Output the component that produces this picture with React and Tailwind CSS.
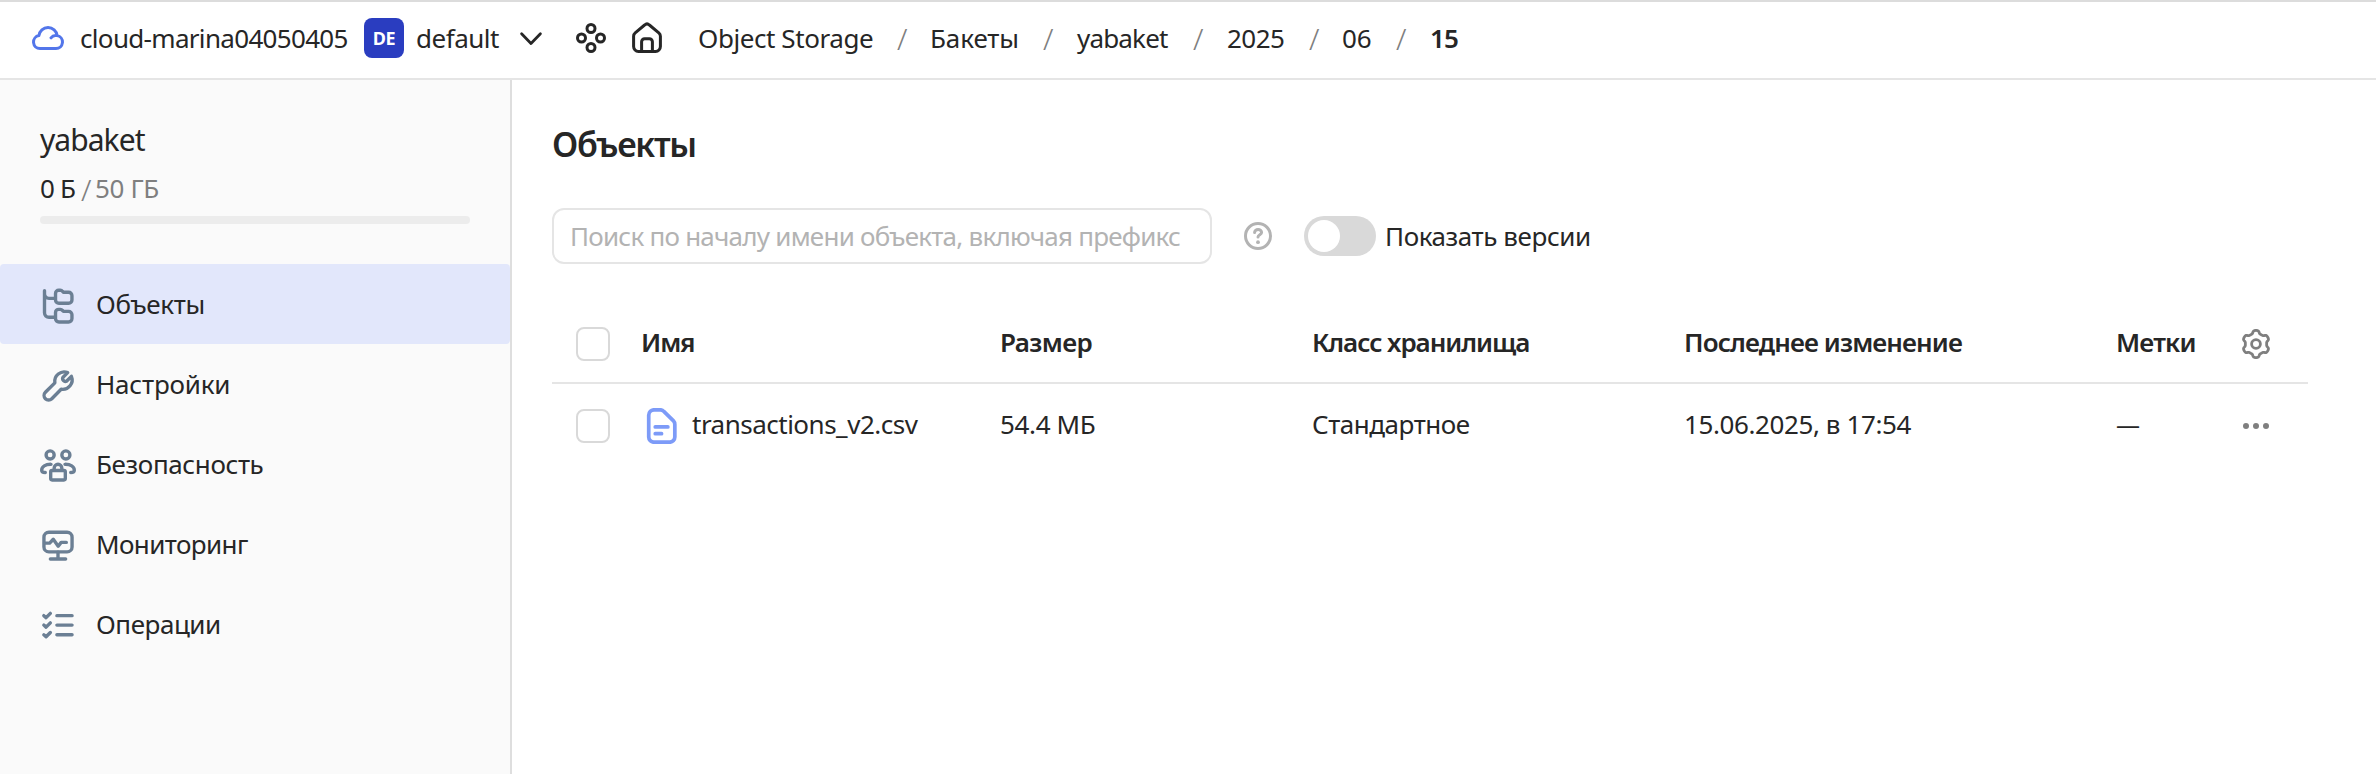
const svg = (size, children, sw = 1.5) => (
  <svg
    width={size}
    height={size}
    viewBox="0 0 16 16"
    fill="none"
    stroke="currentColor"
    strokeWidth={sw}
    strokeLinecap="round"
    strokeLinejoin="round"
    className="block shrink-0"
  >
    {children}
  </svg>
);

const CloudIcon = () =>
  svg(32, <path d="M4 13.25h8a3.25 3.25 0 0 0 .6-6.44A4.6 4.6 0 0 0 8 2.75 4.6 4.6 0 0 0 3.45 6.8 3.25 3.25 0 0 0 4 13.25ZM12.4 6.8a2.9 2.9 0 0 0-2.9 1.1" />);

const ChevronIcon = () => svg(32, <path d="M3.3 5.9 8 10.7l4.7-4.8" />, 1.4);

const NodesIcon = () =>
  svg(
    32,
    <>
      <circle cx="8" cy="3.25" r="2" />
      <circle cx="8" cy="12.75" r="2" />
      <circle cx="3.25" cy="8" r="2" />
      <circle cx="12.75" cy="8" r="2" />
    </>
  );

const HomeIcon = () =>
  svg(
    32,
    <>
      <path d="M1.3 7.1c0-.7.3-1.3.8-1.7l4.7-3.9a1.8 1.8 0 0 1 2.4 0l4.7 3.9c.5.4.8 1 .8 1.7v5.2a2.4 2.4 0 0 1-2.4 2.4H3.7a2.4 2.4 0 0 1-2.4-2.4Z" />
      <path d="M5.3 14.5v-4.6a1.5 1.5 0 0 1 1.5-1.5h2.4a1.5 1.5 0 0 1 1.5 1.5v4.6" />
    </>
  );

const TreeIcon = () =>
  svg(
    36,
    <>
      <path d="M2 1.2v9.8a2 2 0 0 0 2 2h2.7M2 2.6a2 2 0 0 0 2 2h2.7" />
      <path d="M6.9 2.4A1.4 1.4 0 0 1 8.3 1h.7c.4 0 .7.1.9.4l.5.5h2.3a1.5 1.5 0 0 1 1.5 1.5v1.9a1.5 1.5 0 0 1-1.5 1.5H8.4a1.5 1.5 0 0 1-1.5-1.5Z" />
      <path d="M6.9 10.9a1.4 1.4 0 0 1 1.4-1.4h.7c.4 0 .7.1.9.4l.5.5h2.3a1.5 1.5 0 0 1 1.5 1.5v1.7a1.5 1.5 0 0 1-1.5 1.5H8.4a1.5 1.5 0 0 1-1.5-1.5Z" />
    </>
  );

const WrenchIcon = () =>
  svg(
    36,
    <path d="M12.3 2.05A4.2 4.2 0 0 0 6.6 6.6L2.4 10.8a2 2 0 0 0 2.85 2.85L9.4 9.45a4.2 4.2 0 0 0 4.55-5.75L11.9 5.75a1.2 1.2 0 0 1-1.65-1.65Z" />
  );

const PeopleLockIcon = () =>
  svg(
    36,
    <>
      <circle cx="4.5" cy="3.1" r="1.8" />
      <circle cx="11.5" cy="3.1" r="1.8" />
      <path d="M4.9 7.25C2.4 7.2.75 8.2.75 9.9c0 .6.5 1 1.6 1M11.1 7.25c2.5-.05 4.15.95 4.15 2.65 0 .6-.5 1-1.6 1" />
      <rect x="4.75" y="10" width="6.5" height="4.2" rx=".6" />
      <path d="M6.3 9.8v-.9a1.7 1.7 0 0 1 3.4 0v.9" />
    </>
  );

const MonitorIcon = () =>
  svg(
    36,
    <>
      <rect x="1.75" y="1.9" width="12.5" height="8.7" rx="2.2" />
      <path d="M8 10.8v2.8M4.6 13.8h6.8M2 6.7h2.3l1.6-1.7L8.1 8.1l1.3-1.7h2.3" />
    </>
  );

const ChecklistIcon = () =>
  svg(
    36,
    <path d="M7.5 3.4h6.75M7.5 7.6h6.75M7.5 11.9h6.75M1.7 3.4l1 .9 1.9-1.9M1.7 7.6l1 .9 1.9-1.9M1.7 11.9l1 .9 1.9-1.9" />
  );

const FileIcon = () =>
  svg(
    36,
    <>
      <path d="M2.1 3.2A2.4 2.4 0 0 1 4.5.8h2.7c.6 0 1.2.25 1.6.7l4.3 4.2c.4.4.6 1 .6 1.6v5.6a2.3 2.3 0 0 1-2.3 2.3H4.4a2.3 2.3 0 0 1-2.3-2.3Z" />
      <path d="M5 8.4h5.6M5 11.4h2.8" />
    </>,
    1.65
  );

const HelpIcon = () =>
  svg(
    32,
    <>
      <circle cx="8" cy="8" r="6.25" />
      <path d="M6.3 6.3a1.75 1.6 0 0 1 3.5 0c0 1.1-1.8 1.1-1.8 2.2" />
      <circle cx="8" cy="11.1" r=".95" fill="currentColor" stroke="none" />
    </>
  );

// Six-tooth gear outline sampled as a smooth closed curve.
const gearPath = `M${Array.from({ length: 180 }, (_, i) => {
  const a = (i / 180) * Math.PI * 2;
  const r = 6.05 + 0.75 * Math.tanh(2 * Math.cos(6 * a));
  return `${(8 + r * Math.sin(a)).toFixed(2)} ${(8 - r * Math.cos(a)).toFixed(2)}`;
}).join('L')}Z`;

const GearIcon = () =>
  svg(
    32,
    <>
      <path d={gearPath} />
      <circle cx="8" cy="8" r="2.2" />
    </>,
    1.4
  );

const DotsIcon = () => (
  <svg width="32" height="32" viewBox="0 0 32 32" fill="currentColor" className="block shrink-0">
    <circle cx="6" cy="16" r="3" />
    <circle cx="16" cy="16" r="3" />
    <circle cx="26" cy="16" r="3" />
  </svg>
);

const Slash = () => <span className="w-[10px] shrink-0 pt-[2px] text-[30px] font-light leading-9 text-[#7f7f7f]">/</span>;

const Checkbox = () => <span className="block size-[34px] shrink-0 rounded-[8px] border-2 border-[#d9d9d9] bg-white" />;

const menu = [
  { label: 'Объекты', icon: TreeIcon, tracking: 'tracking-[-0.33px]', active: true },
  { label: 'Настройки', icon: WrenchIcon, tracking: 'tracking-[-0.2px]' },
  { label: 'Безопасность', icon: PeopleLockIcon, tracking: 'tracking-[-0.38px]' },
  { label: 'Мониторинг', icon: MonitorIcon, tracking: 'tracking-[-0.6px]' },
  { label: 'Операции', icon: ChecklistIcon, tracking: 'tracking-[-0.45px]' },
];

function Header() {
  return (
    <header className="flex h-20 shrink-0 items-center border-t-2 border-b-2 border-t-[#dcdcdc] border-b-[#e5e5e5] bg-white pb-1 pl-8">
      <span className="text-[#5376ea]"><CloudIcon /></span>
      <span className="ml-[16px] w-[284px] tracking-[-0.68px]">cloud-marina04050405</span>
      <span className="flex size-10 shrink-0 items-center justify-center rounded-[8px] bg-[#2a3dc0] text-[18px] font-bold tracking-[-0.3px] text-white">DE</span>
      <span className="ml-[12px] w-[99px] tracking-[-0.49px]">default</span>
      <ChevronIcon />
      <span className="ml-7"><NodesIcon /></span>
      <span className="ml-6"><HomeIcon /></span>
      <nav className="ml-[35px] flex items-center">
        <span className="w-[199px] tracking-[-0.42px]">Object Storage</span>
        <Slash />
        <span className="ml-[23px] w-[113px] tracking-[-0.1px]">Бакеты</span>
        <Slash />
        <span className="ml-[24px] w-[116px] tracking-[-0.83px]">yabaket</span>
        <Slash />
        <span className="ml-[24px] w-[82px] tracking-[-0.54px]">2025</span>
        <Slash />
        <span className="ml-[23px] w-[54px]">06</span>
        <Slash />
        <span className="ml-[24px] font-semibold tracking-[-0.8px]">15</span>
      </nav>
    </header>
  );
}

function Sidebar() {
  return (
    <aside className="flex w-[512px] shrink-0 flex-col border-r-2 border-[#dedede] bg-[#fafafa]">
      <div className="h-[184px] px-10 pt-[38px]">
        <div className="text-[30px] leading-[44px] tracking-[-0.95px]">yabaket</div>
        <div className="mt-[8px] flex leading-9 text-[#7f7f7f]">
          <span className="w-[41px] tracking-[-0.32px] text-[#262626] [word-spacing:-1px]">0 Б</span>
          <Slash />
          <span className="ml-[4px] tracking-[-0.36px]">50 ГБ</span>
        </div>
        <div className="mt-[8px] h-2 w-[430px] rounded-[4px] bg-[#ececec]" />
      </div>
      <nav className="flex flex-col">
        {menu.map(({ label, icon: Icon, tracking, active }) => (
          <div key={label} className={`flex h-20 items-center rounded-[4px] pl-10 ${active ? 'bg-[#e2e7fb]' : ''}`}>
            <span className="mt-1 text-[#6b7f94]"><Icon /></span>
            <span className={`ml-[20px] ${tracking}`}>{label}</span>
          </div>
        ))}
      </nav>
    </aside>
  );
}

function ObjectsTable() {
  const columns = 'grid grid-cols-[90px_358px_312px_372px_432px_124px_1fr] items-center';
  return (
    <div className="mt-[38px] w-[1756px]">
      <div className={`${columns} h-[82px] border-b-2 border-[#e5e5e5] font-semibold`}>
        <div className="pl-6 pt-[4px]"><Checkbox /></div>
        <div className="-ml-px tracking-[-1.1px]">Имя</div>
        <div className="tracking-[-0.61px]">Размер</div>
        <div className="tracking-[-1.05px]">Класс хранилища</div>
        <div className="tracking-[-0.88px]">Последнее изменение</div>
        <div className="tracking-[-0.8px]">Метки</div>
        <div className="pt-[4px] text-[#7f7f7f]"><GearIcon /></div>
      </div>
      <div className={`${columns} h-[82px]`}>
        <div className="pl-6 pt-[2px]"><Checkbox /></div>
        <div className="flex items-center pl-[2px]">
          <span className="mt-[2px] text-[#7d9bf8]"><FileIcon /></span>
          <span className="-mt-[2px] ml-[12px] tracking-[-0.5px]">transactions_v2.csv</span>
        </div>
        <div className="pb-[2px] tracking-[-0.35px]">54.4 МБ</div>
        <div className="pb-[2px] tracking-[-0.47px]">Стандартное</div>
        <div className="pb-[2px] tracking-[-0.4px]">15.06.2025, в 17:54</div>
        <div className="pb-[2px] text-[24px] leading-9">—</div>
        <div className="pt-[2px] text-[#7f7f7f]"><DotsIcon /></div>
      </div>
    </div>
  );
}

export default function App() {
  return (
    <div className="flex h-[774px] w-[2376px] flex-col overflow-hidden whitespace-nowrap bg-white font-['Noto_Sans','Open_Sans',sans-serif] text-[26px] leading-9 text-[#262626]">
      <Header />
      <div className="flex min-h-0 flex-1">
        <Sidebar />
        <main className="flex flex-1 flex-col pl-10">
          <h1 className="mt-[40px] text-[34px] font-semibold leading-[48px] tracking-[-1.27px]">Объекты</h1>
          <div className="mt-[40px] flex h-14 items-center">
            <div className="flex h-14 w-[660px] items-center rounded-[12px] border-2 border-[#e5e5e5] pb-px pl-4 tracking-[-0.76px] text-[#b3b3b3]">
              Поиск по началу имени объекта, включая префикс
            </div>
            <span className="ml-[30px] text-[#b3b3b3]"><HelpIcon /></span>
            <span className="ml-[30px] flex h-10 w-[72px] shrink-0 items-center rounded-full bg-[#d9d9d9] pl-1">
              <span className="size-8 rounded-full bg-white" />
            </span>
            <span className="ml-[9px] tracking-[-0.42px]">Показать версии</span>
          </div>
          <ObjectsTable />
        </main>
      </div>
    </div>
  );
}
